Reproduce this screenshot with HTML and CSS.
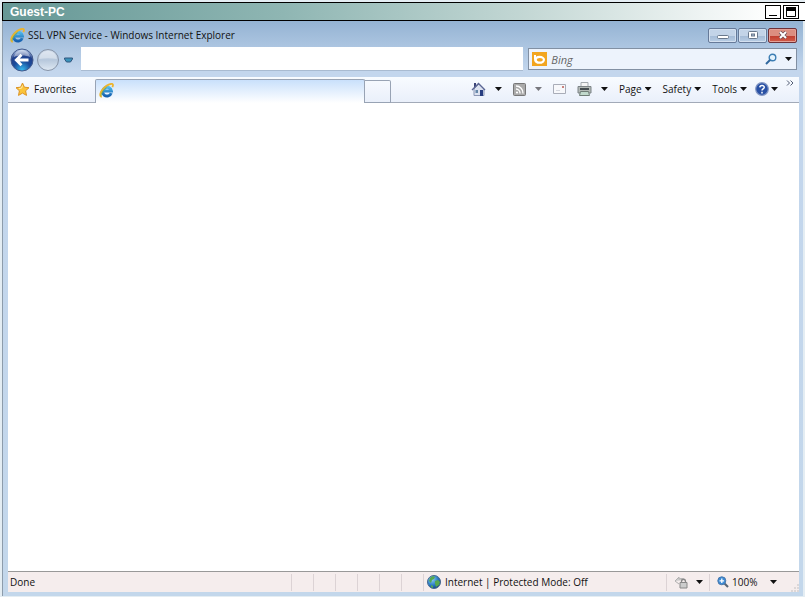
FILE: index.html
```html
<!DOCTYPE html>
<html lang="en">
<head>
  <meta charset="UTF-8" />
  <title>Guest-PC</title>
  <link rel="stylesheet" href="styles.css">
</head>
<body>
  <!-- shared gradients and the IE logo -->
  <svg class="defs" aria-hidden="true">
    <defs>
      <radialGradient id="orb-blue" cx="50%" cy="95%" r="90%">
        <stop offset="0" stop-color="#35b9ee" />
        <stop offset="0.45" stop-color="#1a4c9c" />
        <stop offset="0.75" stop-color="#22418c" />
        <stop offset="1" stop-color="#a9bfe2" />
      </radialGradient>
      <linearGradient id="orb-grey" x1="0" y1="0" x2="0" y2="1">
        <stop offset="0" stop-color="#cfdbea" />
        <stop offset="0.5" stop-color="#b7c8dc" />
        <stop offset="1" stop-color="#dfe9f3" />
      </linearGradient>
      <linearGradient id="ie-blue" x1="0" y1="0" x2="0" y2="1">
        <stop offset="0" stop-color="#4fb9ea" />
        <stop offset="1" stop-color="#1560b0" />
      </linearGradient>
      <radialGradient id="globe" cx="35%" cy="30%" r="75%">
        <stop offset="0" stop-color="#8fd0f4" />
        <stop offset="0.6" stop-color="#2a7cc4" />
        <stop offset="1" stop-color="#123f80" />
      </radialGradient>
      <symbol id="ie" viewBox="0 0 16 16">
        <path d="M13 10.800A4.700 4.700 0 1 1 13.200 8.500H5" fill="none" stroke="url(#ie-blue)" stroke-width="3.200" />
        <path d="M3 14.800C0 14.400 1.200 9.400 5 5.400C8.800 1.600 13.800 0 14.700 1.500C15.200 2.300 14.800 3.400 14.200 4.400" fill="none" stroke="#edb42c" stroke-width="1.900" />
        <path d="M2.300 14C2 11.500 4.500 7.500 8 4.600" fill="none" stroke="#7fae48" />
      </symbol>
    </defs>
  </svg>

  <header class="guest-bar">
    <span class="guest-name">Guest-PC</span>
    <button class="guest-button" aria-label="Minimize guest">
      <svg width="14" height="12" viewBox="0 0 14 12"><path d="M3 9.500h8" stroke="#000" /></svg>
    </button>
    <button class="guest-button" aria-label="Maximize guest">
      <svg width="14" height="12" viewBox="0 0 14 12"><path d="M2.500 1.500h9v9h-9z" fill="none" stroke="#000" /><path d="M2 1h10v4H2z" /></svg>
    </button>
  </header>

  <div class="browser">
    <div class="title-bar">
      <svg class="ie-icon" width="15" height="15"><use href="#ie" /></svg>
      <span class="title">SSL VPN Service - Windows Internet Explorer</span>
      <div class="window-buttons">
        <button class="window-button" aria-label="Minimize">
          <svg width="12" height="8" viewBox="0 0 12 8"><rect x="0.500" y="4.500" width="11" height="3" rx="1" fill="#fff" stroke="#69788c" /></svg>
        </button>
        <button class="window-button" aria-label="Maximize">
          <svg width="12" height="8" viewBox="0 0 12 8"><rect x="1.500" y="0.500" width="9" height="7" rx="1" fill="#fff" stroke="#69788c" /><rect x="4.500" y="3" width="3" height="2" fill="#a9bbd2" stroke="#69788c" /></svg>
        </button>
        <button class="window-button close" aria-label="Close">
          <svg width="12" height="8" viewBox="0 0 12 8"><path d="M3 1l6 6M9 1L3 7" stroke="#6c4a52" stroke-width="3.500" /><path d="M3 1l6 6M9 1L3 7" stroke="#fff" stroke-width="2" /></svg>
        </button>
      </div>
    </div>

    <div class="nav-bar">
      <div class="history">
        <button class="plain" aria-label="Back">
          <svg width="24" height="24" viewBox="0 0 24 24"><circle cx="12" cy="12" r="11" fill="url(#orb-blue)" stroke="#43598b" /><path d="M4 9C5 4 9 2 12 2s7 2 8 7c-5-2-11-2-16 0z" fill="#fff" opacity="0.450" /><path d="M18.500 12H7M11.500 6.800L6.300 12l5.200 5.200" fill="none" stroke="#fff" stroke-width="2.800" /></svg>
        </button>
        <button class="plain" aria-label="Forward">
          <svg width="24" height="24" viewBox="0 0 24 24"><circle cx="12" cy="12" r="10.500" fill="url(#orb-grey)" stroke="#8794a8" /><path d="M3 11C4 5 8 3 12 3s8 2 9 8c-6-1-12-1-18 0z" fill="#fff" opacity="0.350" /></svg>
        </button>
        <button class="plain" aria-label="Recent pages">
          <svg width="9" height="6" viewBox="0 0 9 6"><path d="M.5 1h8v1L6.500 5h-4L.5 2z" fill="#3b93bb" stroke="#31567e" /></svg>
        </button>
      </div>
      <input class="address" type="text" aria-label="Address">
      <div class="search">
        <svg width="15" height="14" viewBox="0 0 15 14"><path d="M0 0h15v14H0z" fill="#f2a51f" /><path d="M2 3h2v4H2z" fill="#fff" /><ellipse cx="7.500" cy="7.800" rx="5.500" ry="4" fill="#fff" /><ellipse cx="7.800" cy="7.800" rx="3" ry="1.800" fill="#f2a51f" /></svg>
        <input type="text" placeholder="Bing" aria-label="Search">
        <button class="plain" aria-label="Search Bing">
          <svg width="12" height="12" viewBox="0 0 12 12"><circle cx="7.500" cy="4.500" r="3.300" fill="#e4f2fc" stroke="#3d7eb4" stroke-width="1.400" /><path d="M5 7L1 11" stroke="#30689e" stroke-width="2" /></svg>
        </button>
        <button class="plain" aria-label="Search options"><span class="arrow"></span></button>
      </div>
    </div>

    <div class="tab-bar">
      <button class="favorites">
        <svg width="15" height="15" viewBox="0 0 15 15"><path d="M7.500 1l1.900 4.200 4.600.5-3.400 3.100.9 4.600-4-2.300-4 2.300.9-4.600L1 5.700l4.600-.5z" fill="#fbc43a" stroke="#dc9324" stroke-linejoin="round" /><path d="M7.500 3.500L6.500 6.200l-2.700.3" fill="none" stroke="#fff0ae" /></svg>
        Favorites
      </button>
      <div class="tab" role="tab"><svg width="15" height="15"><use href="#ie" /></svg></div>
      <button class="new-tab" aria-label="New tab"></button>
      <div class="commands">
        <button class="command" aria-label="Home">
          <svg width="15" height="15" viewBox="0 0 15 15"><path d="M3 1h2v4H3z" fill="#3b4377" /><path d="M3 7v6.500h10V7L8 2z" fill="#dce2f0" stroke="#8b96b4" /><path d="M1 8l6.500-6.500L14 8" fill="none" stroke="#5b6694" stroke-width="1.400" /><path d="M9 8h3v6H9z" fill="#283d80" /><path d="M4.500 8h2.500v3H4.500z" fill="#6688aa" /></svg>
          <span class="arrow"></span>
        </button>
        <button class="command" aria-label="Feeds">
          <svg width="13" height="13" viewBox="0 0 13 13"><rect x="0.500" y="0.500" width="12" height="12" rx="1" fill="#aaa" stroke="#777" /><circle cx="4" cy="9.500" r="1.100" fill="#fff" /><path d="M3 6a4 4 0 0 1 4 4.500M3 3a7 7 0 0 1 7 7.500" fill="none" stroke="#fff" stroke-width="1.300" /></svg>
          <span class="arrow off"></span>
        </button>
        <button class="command" aria-label="Read mail">
          <svg width="13" height="10" viewBox="0 0 13 10"><path d="M.5.5h12v9H.5z" fill="#f7f8fb" stroke="#a9adb8" /><path d="M9 2h2v2H9z" fill="#c9827e" /><path d="M3 6.500h4" stroke="#d4d7de" /></svg>
        </button>
        <button class="command" aria-label="Print">
          <svg width="15" height="14" viewBox="0 0 15 14"><path d="M4 .5h7v4H4z" fill="#f5f5f5" stroke="#a3a9ae" /><path d="M1 4.500h13V11H1z" fill="#b3b9b6" stroke="#7d8487" /><path d="M3 6h9v2H3z" fill="#454c50" /><path d="M3.500 9.500h8l1 4h-10z" fill="#c1d9cc" stroke="#6f7d76" /></svg>
          <span class="arrow"></span>
        </button>
        <button class="command text">Page<span class="arrow"></span></button>
        <button class="command text">Safety<span class="arrow"></span></button>
        <button class="command text">Tools<span class="arrow"></span></button>
        <button class="command help" aria-label="Help">
          <svg width="14" height="14" viewBox="0 0 14 14"><circle cx="7" cy="7" r="6.300" fill="#2951a5" stroke="#8498c4" stroke-width="1.200" /><path d="M4.800 5.400C5 2.800 9.400 3 9.200 5.400C9 7 7 6.700 7 8.600M7 9.800v1.600" fill="none" stroke="#fff" stroke-width="1.500" /></svg>
          <span class="arrow"></span>
        </button>
        <button class="command more" aria-label="More commands">
          <svg width="8" height="6" viewBox="0 0 8 6"><path d="M1 .5L3.500 3 1 5.500M4.500 .5L7 3 4.500 5.500" fill="none" stroke="#535d74" /></svg>
        </button>
      </div>
    </div>

    <main class="page"></main>

    <footer class="status-bar">
      <span class="status">Done</span>
      <div class="cells"><i></i><i></i><i></i><i></i><i></i><i></i></div>
      <div class="zone">
        <svg width="14" height="14" viewBox="0 0 14 14"><circle cx="7" cy="7" r="6.500" fill="url(#globe)" stroke="#45688f" /><path d="M3 3c2-2 4-2 5-1L7 4 5 5 4 8 2 6zM8 6l3-1 2 2-1 3-3 2-1-3zM4 10l2 1v2l-2-1z" fill="#56a84f" /></svg>
        Internet | Protected Mode: Off
      </div>
      <button class="lock" aria-label="Privacy settings">
        <svg width="15" height="14" viewBox="0 0 15 14"><path d="M1 6l4-4v2c3-1 5 0 6 1M1 6l4 3" fill="#ccc" stroke="#b0b0b0" /><path d="M7.500 8V6.500c0-3 4-3 4 0V8" fill="none" stroke="#888" stroke-width="1.300" /><path d="M6 7.500h7V13H6z" fill="#ccc" stroke="#888" /></svg>
        <span class="arrow"></span>
      </button>
      <button class="zoom">
        <svg width="12" height="12" viewBox="0 0 12 12"><path d="M7 7l4 4" stroke="#576575" stroke-width="2.200" /><circle cx="4.800" cy="4.800" r="4" fill="#3d8bd6" stroke="#4a79ab" /><path d="M2.500 4.800h4.600M4.800 2.500v4.600" stroke="#fff" stroke-width="1.300" /></svg>
        100%
        <span class="arrow"></span>
      </button>
      <svg class="grip" width="9" height="9" viewBox="0 0 9 9"><path d="M7 1h2v2H7zM4 4h2v2H4zM7 4h2v2H7zM1 7h2v2H1zM4 7h2v2H4zM7 7h2v2H7z" fill="#dcd7d7" /></svg>
    </footer>
  </div>
</body>
</html>
```
FILE: styles.css
```css
* {
  box-sizing: border-box;
}

body {
  margin: 0;
  padding: 2px 0 1px 2px;
  height: 100vh;
  display: flex;
  flex-direction: column;
  background: #e4edf3;
  font-family: "Open Sans", "Noto Sans", sans-serif;
  font-size: 10px;
  color: #111;
}

button, input {
  font: inherit;
  color: inherit;
  margin: 0;
  padding: 0;
  border: 0;
  background: none;
}

svg {
  display: block;
  flex: none;
}

.defs {
  position: absolute;
  width: 0;
  height: 0;
}

.guest-bar {
  flex: none;
  height: 19px;
  display: flex;
  align-items: center;
  gap: 2px;
  padding: 0 6px 0 7px;
  border: 1px solid #000;
  border-right: 0;
  background: linear-gradient(to right, #669896, #8fb6b3 35%, #c3d7d4 65%, #fff 96%);
}

.guest-name {
  flex: 1;
  font-family: "Liberation Sans", Arial, sans-serif;
  font-size: 12px;
  font-weight: bold;
  color: #fff;
}

.guest-button {
  width: 16px;
  height: 14px;
  border: 1px solid #000;
  background: #fff;
}

.browser {
  flex: 1;
  min-height: 0;
  display: flex;
  flex-direction: column;
  margin-right: 2px;
  padding: 0 4px 4px 5px;
  border-left: 1px solid #8d9cab;
  background: linear-gradient(#94b3d3, #c3d6ed 50px, #c3d7eb);
}

.title-bar {
  flex: none;
  height: 26px;
  display: flex;
  align-items: center;
  gap: 3px;
  padding: 2px 2px 0 2px;
}

.title {
  flex: 1;
}

.window-buttons {
  display: flex;
  gap: 1px;
}

.window-button {
  width: 29px;
  height: 15px;
  display: flex;
  align-items: center;
  justify-content: center;
  border: 1px solid #667a99;
  border-radius: 2px;
  box-shadow: inset 0 0 0 1px #d4e1f0;
  background: linear-gradient(#c3d4e8 50%, #a3bad5 50%, #b9cee5);
}

.window-button.close {
  border-color: #6f3138;
  box-shadow: inset 0 0 0 1px #e5a197;
  background: linear-gradient(#dc8d80 50%, #be3a2d 50%, #d25d4a);
}

.nav-bar {
  flex: none;
  height: 30px;
  display: flex;
  align-items: flex-start;
  gap: 5px;
  padding-right: 2px;
}

.history {
  display: flex;
  align-items: center;
  gap: 2px;
  width: 68px;
  padding: 1px 0 0 2px;
}

.history button:last-child {
  margin-left: 2px;
}

.address {
  flex: 444;
  min-width: 0;
  height: 24px;
  padding: 0 6px;
  background: #fff;
  border-bottom: 1px solid #a9bbd1;
}

.search {
  flex: 268;
  height: 22px;
  margin-top: 1px;
  display: flex;
  align-items: center;
  gap: 4px;
  padding: 0 4px 0 3px;
  border: 1px solid #8290a3;
  background: #edf3fc;
}

.search input {
  flex: 1;
  min-width: 0;
  font-size: 11px;
  font-style: italic;
}

.search input::placeholder {
  color: #666;
  opacity: 1;
}

.search .arrow {
  margin-left: 4px;
}

.arrow {
  display: block;
  width: 7px;
  height: 4px;
  background: #111;
  clip-path: polygon(0 0, 100% 0, 50% 100%);
}

.arrow.off {
  background: #77777d;
}

.tab-bar {
  flex: none;
  height: 26px;
  display: flex;
  background: linear-gradient(#f8fbff, #e9effa);
  box-shadow: inset 0 -1px #a2aab8;
}

.favorites {
  width: 87px;
  display: flex;
  align-items: center;
  gap: 4px;
  padding: 0 0 2px 7px;
}

.tab {
  flex: 264;
  min-width: 0;
  margin-top: 2px;
  padding: 3px;
  border: 1px solid #98a3b4;
  border-bottom: 0;
  border-radius: 2px 2px 0 0;
  background: linear-gradient(#c9e0fb, #fff);
}

.new-tab {
  width: 26px;
  margin-top: 3px;
  border: 1px solid #98a3b4;
  border-left: 0;
  border-radius: 0 2px 0 0;
}

.commands {
  flex: 406;
  display: flex;
  align-items: center;
  justify-content: flex-end;
  gap: 8px;
  padding: 0 5px 2px 0;
}

.command {
  display: flex;
  align-items: center;
  gap: 9px;
  margin-right: 3px;
}

.command:nth-last-child(-n+3) {
  margin-right: 0;
}

.command.text {
  gap: 3px;
}

.command.help {
  gap: 2px;
}

.command.more {
  align-self: flex-start;
  margin-top: 3px;
}

.page {
  flex: 1;
  background: #fff;
}

.status-bar {
  flex: none;
  height: 21px;
  display: flex;
  align-items: center;
  padding-left: 2px;
  border-top: 1px solid #999;
  background: #f5eded;
}

.status {
  flex: 1;
}

.cells {
  display: flex;
}

.cells i {
  width: 22px;
  height: 17px;
  border-left: 1px solid #dcd3d5;
}

.zone {
  display: flex;
  align-items: center;
  gap: 4px;
  width: 243px;
  height: 17px;
  padding-left: 3px;
  border-left: 1px solid #dcd3d5;
}

.lock, .zoom {
  display: flex;
  align-items: center;
  gap: 7px;
  height: 17px;
  border-left: 1px solid #dcd3d5;
}

.lock {
  width: 43px;
  padding-left: 7px;
}

.zoom {
  width: 68px;
  gap: 3px;
  padding-left: 7px;
}

.zoom .arrow {
  margin-left: auto;
}

.grip {
  align-self: flex-end;
  margin-left: 13px;
}
```
